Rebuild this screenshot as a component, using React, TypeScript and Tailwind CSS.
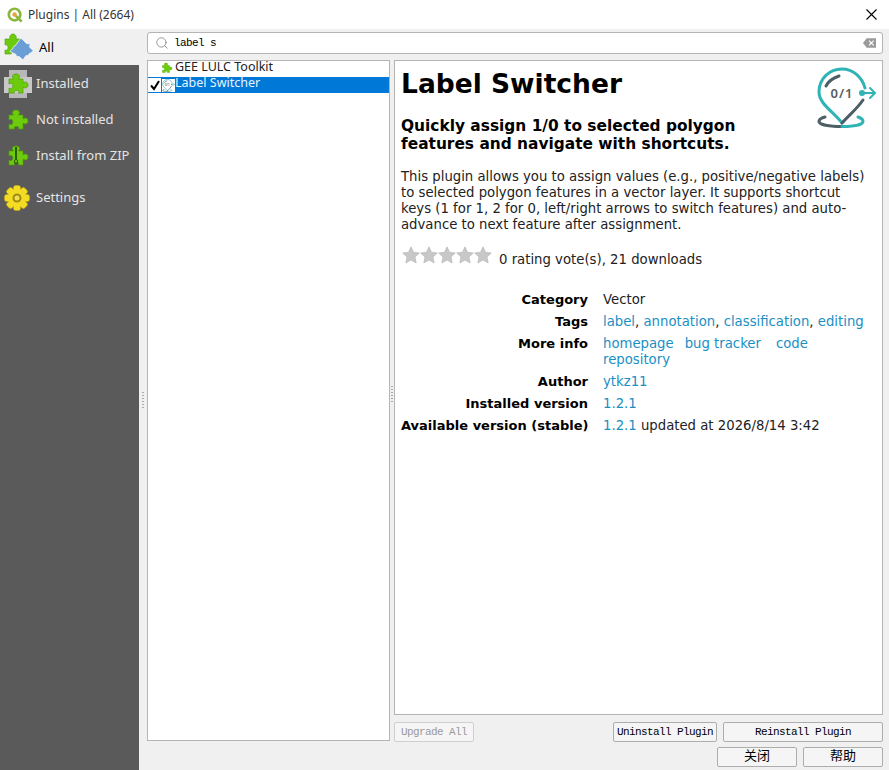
import { Search } from "lucide-react";

const sans = "font-['DejaVu_Sans','Noto_Sans_CJK_SC',sans-serif]";
const ui = "font-['Noto_Sans','Noto_Sans_CJK_SC',sans-serif]";
const mono = "font-['Liberation_Mono','Noto_Sans_CJK_SC',monospace]";

const PUZZLE =
  "M3 7h4.500c-.8-1-1-1.600-1-2.400C6.500 3 8 2 10 2s3.500 1 3.500 2.600c0 .8-.2 1.400-1 2.400H17v4c1-.7 1.600-.9 2.400-.9C21 10.100 22 11.300 22 13s-1 2.900-2.600 2.900c-.8 0-1.400-.2-2.400-.9v6h-4.500c.3-.5.4-.8.4-1.200 0-.8-1-1.300-2.400-1.300s-2.400.5-2.400 1.300c0 .4.1.7.4 1.200H3v-5c.8.5 1.300.7 1.900.7 1.200 0 2-1.200 2-2.700s-.8-2.700-2-2.700c-.6 0-1.100.2-1.900.7z";

function Puzzle({ className = "" }: { className?: string }) {
  return (
    <svg viewBox="0 0 24 24" className={className}>
      <path d={PUZZLE} fill="#6ccb0c" stroke="#4f9e05" strokeWidth="0.7" />
    </svg>
  );
}

function AllIcon() {
  return (
    <svg viewBox="0 0 30 28" className="h-[28px] w-[30px]">
      <path d="M1 6h5C5 3 7 1 9 1s4 2 3 5h4v5L7 21H1v-4c2 1 3-1 3-2.500S3 11 1 12z" fill="#6ccb0c" stroke="#4f9e05" strokeWidth="0.6" />
      <path
        d="M17 5l6 6c2-1 3-.5 3 1l-.5 2 4 4-4.500 3c-.5 1.500-1.500 2-3 1.500L19 27l-4-3.500c-2 .5-3-.5-3-2l-6-3c1-1.500 2-2.500 3-3 0-1.500 .5-2.500 2-2.500z"
        fill="#6b9ed4"
        stroke="#f4f7fb"
        strokeWidth="0.8"
      />
    </svg>
  );
}

function Gear() {
  return (
    <svg viewBox="0 0 26 26" className="-ml-[2px] h-[26px] w-[26px]">
      <g fill="#f3dc22" stroke="#c7a912" strokeWidth="0.5">
        {[0, 45, 90, 135, 180, 225, 270, 315].map((a) => (
          <rect key={a} x="9.500" y="0.500" width="7" height="7" rx="2" transform={`rotate(${a} 13 13)`} />
        ))}
      </g>
      <circle cx="13" cy="13" r="9" fill="#f3dc22" />
      <circle cx="13" cy="13" r="4.500" fill="#a08c14" />
      <circle cx="13" cy="13" r="2.500" fill="#f0e050" />
    </svg>
  );
}

function PluginLogo({ className = "" }: { className?: string }) {
  return (
    <svg viewBox="0 0 60 62" className={className} fill="none" strokeLinecap="round">
      <path d="M25 56C17 45 2 37 2 25 2 12 12 2 25 2c11 0 20 8 23 19" stroke="#2fb3b5" strokeWidth="3" />
      <path d="M9 19c2-4 7-8 13-10" stroke="#4d5f66" strokeWidth="3" />
      <path d="M25 56c7-8 15-14 21-23" stroke="#4d5f66" strokeWidth="3" />
      <path d="M8 50c-4 1-6 3-6 4.500 0 3 10 5 23 5" stroke="#4d5f66" strokeWidth="3" />
      <path d="M25 59.500c13 0 21-2 21-5 0-1.500-2-3.500-5-4.500" stroke="#2fb3b5" strokeWidth="3" />
      <circle cx="45" cy="26" r="3" fill="#2fb3b5" />
      <path d="M45 26h13M53 21l5 5-5 5" stroke="#2fb3b5" strokeWidth="2" />
      <text x="25" y="31" textAnchor="middle" fontSize="13" fontWeight="600" letterSpacing="1" fill="#555e63" className={ui}>
        0/1
      </text>
    </svg>
  );
}

function Stars() {
  return (
    <div className="-mt-[9px] flex">
      {[0, 1, 2, 3, 4].map((i) => (
        <svg key={i} viewBox="0 0 18 18" className="h-[18px] w-[18px]">
          <path
            d="M9 .8l2.500 5.500 5.800.7-4.300 4 1.200 5.900L9 14l-5.200 2.900L5 11 .7 7l5.800-.7z"
            fill="#c8c8c8"
            stroke="#b0b0b0"
            strokeWidth="0.6"
          />
        </svg>
      ))}
    </div>
  );
}

function NavItem({ label, icon, className = "h-[36px]" }: { label: string; icon: React.ReactNode; className?: string }) {
  return (
    <div className={`flex items-center ${className}`}>
      <div className="flex w-[36px] justify-center">{icon}</div>
      <span className={`${ui} text-[13px] text-[#e4e4e4]`}>{label}</span>
    </div>
  );
}

function Row({ label, children }: { label: string; children: React.ReactNode }) {
  return (
    <>
      <div className="whitespace-nowrap text-right text-[13px] font-bold leading-[16px] text-black">{label}</div>
      <div className="text-[13.250px] leading-[16px] text-[#222]">{children}</div>
    </>
  );
}

function Link({ children }: { children: React.ReactNode }) {
  return <span className="text-[#1a8fc4]">{children}</span>;
}

function Btn({ children, className = "" }: { children: React.ReactNode; className?: string }) {
  return (
    <div
      className={`flex h-[20px] items-center justify-center whitespace-nowrap rounded-[2px] border border-[#adadad] bg-[#f5f5f5] text-[11px] tracking-[-0.6px] text-black ${mono} ${className}`}
    >
      {children}
    </div>
  );
}

function SplitterDots() {
  return (
    <div className="flex flex-col gap-[2px]">
      {[0, 1, 2, 3, 4, 5].map((i) => (
        <div key={i} className="h-[1px] w-[2px] bg-[#a8a8a8]" />
      ))}
    </div>
  );
}

export default function App() {
  return (
    <div className={`flex h-[770px] w-[889px] flex-col overflow-hidden bg-[#f0f0f0] ${sans}`}>
      {/* title bar */}
      <div className="flex h-[29px] items-center bg-white pl-[7px] pr-[12px]">
        <svg viewBox="0 0 18 18" className="h-[16px] w-[16px]" fill="none">
          <circle cx="8.500" cy="8.500" r="6.500" stroke="#8cb63c" strokeWidth="3" />
          <circle cx="8.500" cy="8.500" r="2.500" fill="#e8a33d" />
          <path d="M10 10l6.500 6.500" stroke="#8cb63c" strokeWidth="3" />
        </svg>
        <span className={`ml-[5px] text-[12px] text-[#333] ${ui}`}>Plugins | All (2664)</span>
        <svg viewBox="0 0 11 11" className="ml-auto h-[11px] w-[11px]">
          <path d="M.5.5l10 10m0-10l-10 10" stroke="#000" strokeWidth="1.100" />
        </svg>
      </div>

      <div className="flex flex-1">
        {/* sidebar */}
        <div className="flex w-[139px] flex-col">
          <div className="flex h-[36px] items-center gap-[5px] bg-[#f0f0f0] pl-[4px]">
            <AllIcon />
            <span className={`mt-[1px] text-[13px] text-black ${ui}`}>All</span>
          </div>
          <div className="flex flex-1 flex-col bg-[#5a5a5a] pt-[1px]">
            <NavItem
              label="Installed"
              icon={
                <div className="relative flex h-[28px] w-[28px] items-center justify-center">
                  <div className="absolute inset-y-0 left-[5px] w-[18px] bg-[#b8b8b8]" />
                  <div className="absolute inset-x-0 top-[7px] h-[16px] bg-[#c8c8c8]" />
                  <Puzzle className="relative h-[24px] w-[24px]" />
                </div>
              }
            />
            <NavItem label="Not installed" icon={<Puzzle className="h-[24px] w-[24px]" />} />
            <NavItem
              label="Install from ZIP"
              icon={
                <div className="relative">
                  <Puzzle className="h-[24px] w-[24px]" />
                  <div className="absolute left-[9px] top-[3px] h-[13px] w-[2px] bg-[#2d5a06]" />
                  <div className="absolute left-[8px] top-[15px] h-[5px] w-[4px] rounded-full border border-[#2d5a06]" />
                </div>
              }
            />
            <NavItem label="Settings" icon={<Gear />} className="mt-[6px] h-[36px]" />
          </div>
        </div>

        {/* main */}
        <div className="flex w-[8px] items-center justify-center">
          <SplitterDots />
        </div>
        <div className="flex flex-1 flex-col pr-[6px] pt-[3px]">
          <div className="flex h-[22px] items-center rounded-[3px] border border-[#b4b4b4] bg-white pl-[7px] pr-[6px]">
            <Search className="h-[14px] w-[14px] text-[#8a8a8a]" strokeWidth={1.500} />
            <span className={`ml-[5px] text-[11px] tracking-[-0.6px] text-black ${mono}`}>label s</span>
            <svg viewBox="0 0 14 10" className="ml-auto h-[10px] w-[13px]">
              <path d="M4 0h10v10H4L0 5z" fill="#9a9a9a" />
              <path d="M6.500 2.500l5 5m0-5l-5 5" stroke="#fff" strokeWidth="1.300" />
            </svg>
          </div>

          <div className="mt-[6px] flex">
            {/* plugin list */}
            <div className={`h-[681px] w-[243px] border border-[#b4b4b4] bg-white text-[12.500px] ${ui}`}>
              <div className="flex h-[16px] items-center pb-[3px] pl-[13px] text-[#222]">
                <Puzzle className="h-[12px] w-[12px]" />
                <span className="ml-[2px]">GEE LULC Toolkit</span>
              </div>
              <div className="flex h-[16px] items-center bg-[#0078d7] text-[#e8f3fc]">
                <div className="flex h-[14px] w-[13px] items-center justify-center bg-white">
                  <svg viewBox="0 0 12 12" className="h-[12px] w-[12px]" fill="none">
                    <path d="M2 6.500l3 3.500 5-8" stroke="#000" strokeWidth="2" />
                  </svg>
                </div>
                <div className="ml-[1px] h-[13px] w-[13px] bg-white">
                  <PluginLogo className="h-[13px] w-[13px]" />
                </div>
                <span className="mb-[3px]">Label Switcher</span>
              </div>
            </div>

            <div className="flex w-[4px] items-center justify-center pb-[14px]">
              <SplitterDots />
            </div>

            <div className="flex flex-1 flex-col">
              {/* detail pane */}
              <div className="relative h-[655px] border border-[#b4b4b4] bg-white pl-[6px] pt-[7px]">
                <PluginLogo className="absolute right-[5px] top-[6px] h-[62px] w-[60px]" />
                <h1 className="text-[26.500px] font-bold leading-[32px] text-black">Label Switcher</h1>
                <h2 className="mt-[17px] w-[380px] text-[15.400px] font-bold leading-[18px] text-black">
                  Quickly assign 1/0 to selected polygon features and navigate with shortcuts.
                </h2>
                <p className="mt-[16px] w-[468px] text-[13.250px] leading-[16px] text-[#222]">
                  This plugin allows you to assign values (e.g., positive/negative labels) to selected polygon features in a vector layer. It supports shortcut keys (1 for 1, 2 for 0, left/right arrows to switch features) and auto-advance to next feature after assignment.
                </p>
                <div className="mt-[17px] flex items-center gap-[7px] pl-[1px] text-[13.250px] text-[#222]">
                  <Stars />
                  <span>0 rating vote(s), 21 downloads</span>
                </div>
                <div className="mt-[22px] grid grid-cols-[187px_1fr] gap-x-[15px] gap-y-[6px]">
                  <Row label="Category">Vector</Row>
                  <Row label="Tags">
                    <Link>label</Link>, <Link>annotation</Link>, <Link>classification</Link>, <Link>editing</Link>
                  </Row>
                  <Row label="More info">
                    <Link>homepage</Link>
                    <span className="ml-[11px]"><Link>bug tracker</Link></span>
                    <span className="ml-[15px]"><Link>code</Link></span>
                    <br />
                    <Link>repository</Link>
                  </Row>
                  <Row label="Author"><Link>ytkz11</Link></Row>
                  <Row label="Installed version"><Link>1.2.1</Link></Row>
                  <Row label="Available version (stable)">
                    <Link>1.2.1</Link> updated at 2026/8/14 3:42
                  </Row>
                </div>
              </div>

              <div className="mt-[7px] flex">
                <Btn className="w-[80px] !border-[#cfcfcf] !text-[#9a9a9a]">Upgrade All</Btn>
                <Btn className="ml-auto w-[104px]">Uninstall Plugin</Btn>
                <Btn className="ml-[6px] w-[160px]">Reinstall Plugin</Btn>
              </div>
            </div>
          </div>

          <div className="mt-[5px] flex justify-end gap-[6px]">
            <Btn className="w-[80px] !text-[13px] !tracking-normal">关闭</Btn>
            <Btn className="w-[80px] !text-[13px] !tracking-normal">帮助</Btn>
          </div>
        </div>
      </div>
    </div>
  );
}
